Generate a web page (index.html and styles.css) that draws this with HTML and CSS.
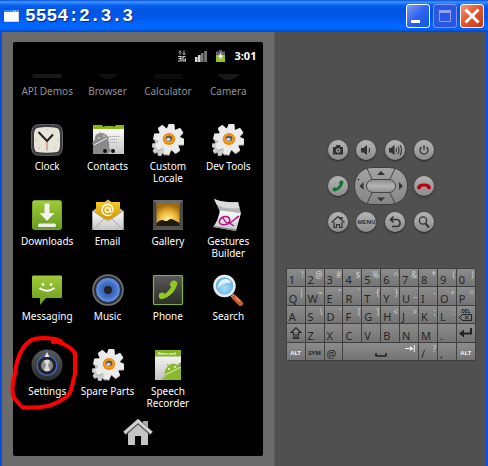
FILE: index.html
```html
<!DOCTYPE html>
<html lang="en">
<head>
    <meta charset="UTF-8">
    <meta name="viewport" content="width=device-width, initial-scale=1.0">
    <title>5554:2.3.3</title>
    <link rel="stylesheet" href="styles.css">
</head>
<body>
    <!-- shared gradients and shapes -->
    <svg class="defs" aria-hidden="true">
        <defs>
            <linearGradient id="steel" x1="0" y1="0" x2="0" y2="1"><stop offset="0" stop-color="#fff"/><stop offset="1" stop-color="#c4c4c4"/></linearGradient>
            <linearGradient id="green" x1="0" y1="0" x2="0" y2="1"><stop offset="0" stop-color="#a0cb3c"/><stop offset="1" stop-color="#669c1c"/></linearGradient>
            <linearGradient id="dark" x1="0" y1="0" x2="0" y2="1"><stop offset="0" stop-color="#595959"/><stop offset="1" stop-color="#2b2b2b"/></linearGradient>
            <linearGradient id="gold" x1="0" y1="0" x2="0" y2="1"><stop offset="0" stop-color="#f6c928"/><stop offset="1" stop-color="#d39a00"/></linearGradient>
            <linearGradient id="pad" x1="0" y1="0" x2="0" y2="1"><stop offset="0" stop-color="#a4a4a4"/><stop offset="1" stop-color="#858585"/></linearGradient>
            <linearGradient id="ok" x1="0" y1="0" x2="0" y2="1"><stop offset="0" stop-color="#8b8b8b"/><stop offset="0.5" stop-color="#b4b4b4"/><stop offset="1" stop-color="#8e8e8e"/></linearGradient>
            <radialGradient id="sunset" cx="0.5" cy="0.75" r="0.7"><stop offset="0" stop-color="#fff3a8"/><stop offset="0.5" stop-color="#eebb3c"/><stop offset="1" stop-color="#a36a08"/></radialGradient>
            <radialGradient id="blue"><stop offset="0" stop-color="#2c4c94"/><stop offset="0.6" stop-color="#4070c8"/><stop offset="1" stop-color="#6c9ae8"/></radialGradient>
            <radialGradient id="lens" cx="0.5" cy="0.6"><stop offset="0" stop-color="#a5dbf7"/><stop offset="1" stop-color="#5fb2e6"/></radialGradient>
            <g id="teeth">
                <circle r="11"/>
                <path id="tooth" d="M-4-10L-2.800-15.500H2.800L4-10V10L2.800 15.500H-2.800L-4 10Z"/>
                <use href="#tooth" transform="rotate(45)"/>
                <use href="#tooth" transform="rotate(90)"/>
                <use href="#tooth" transform="rotate(135)"/>
            </g>
        </defs>
        <symbol id="gear" viewBox="0 0 32 32">
            <use href="#teeth" transform="translate(9 23.500) rotate(10) scale(0.580)" fill="#9c9c9c"/>
            <use href="#teeth" transform="translate(9 22.500) rotate(10) scale(0.580)" fill="#cfcfcf"/>
            <use href="#teeth" transform="translate(17 16) rotate(10)" fill="#a8a8a8"/>
            <use href="#teeth" transform="translate(17 15) rotate(10)" fill="#ebebeb"/>
            <ellipse cx="17" cy="15" rx="6.300" ry="6" fill="#f08a00"/>
            <ellipse cx="17" cy="14.600" rx="4.800" ry="4.200" fill="#ffa62b"/>
            <ellipse cx="17" cy="14.400" rx="3.500" ry="2.800" fill="#5c5c5c"/>
            <ellipse cx="16.400" cy="15.400" rx="2" ry="1.300" fill="#dedede"/>
        </symbol>
        <symbol id="handset" viewBox="0 0 20 20">
            <path d="M4.200 17.800C2.500 17.400 2 15 2.600 13.200C3.500 12 6 11.600 6.600 12.500C7 13.400 7.300 13.200 8.300 12.400C10.500 10.700 11.600 9.200 12.600 7.500C12.300 6.700 11.300 6.500 11.500 5.500C11.800 4 13 2.300 14.500 2.100C16.500 2 18 3 17.800 4.500C16.500 10.500 11.500 16.500 4.200 17.800Z"/>
        </symbol>
    </svg>

    <div class="window">
        <header class="titlebar">
            <svg class="title-icon" width="15" height="12" viewBox="0 0 15 12"><path d="M0 0H15V12H0Z" fill="#fff"/><path d="M0 0H15V2H0Z" fill="#2d8cf0"/><path d="M9 0.500H10V1.500H9ZM11 0.500H12V1.500H11Z" fill="#fff"/><path d="M13 0H14.500V1.500H13Z" fill="#e8a070"/><path d="M0 11.500H14.500V2" fill="none" stroke="#d8d4c4"/></svg>
            <h1 class="title">5554:2.3.3</h1>
            <button class="win-btn" aria-label="Minimize"><svg viewBox="0 0 20 20"><path d="M3 14H12V17H3Z" fill="#fff"/></svg></button>
            <button class="win-btn win-max" aria-label="Maximize" disabled><svg viewBox="0 0 20 20"><path d="M4.500 5.500H15.500V15.500H4.500Z" fill="none" stroke="#8fa4f0"/><path d="M4 4H16V7H4Z" fill="#8fa4f0"/></svg></button>
            <button class="win-btn win-close" aria-label="Close"><svg viewBox="0 0 20 20"><path d="M4.500 4.500L15.500 15.500M15.500 4.500L4.500 15.500" stroke="#fff" stroke-width="3" stroke-linecap="square"/></svg></button>
        </header>

        <main class="emulator">
            <section class="device">
                <div class="screen">
                    <div class="status">
                        <svg width="8" height="12" viewBox="0 0 8 12"><path d="M2 5V1M0.500 2.500L2 0.800L3.500 2.500M6 0.500V4.500M4.500 3L6 4.800L7.500 3" fill="none" stroke="#aaa"/><path d="M0 6.500H3V11H0M0.500 8.700H3M7.500 6.500H5V11H7.500V9H6.300" fill="none" stroke="#ccc" stroke-width="1.200"/></svg>
                        <svg width="12" height="12" viewBox="0 0 12 12"><path d="M0 7H2.600V12H0ZM3 5H5.600V12H3Z" fill="#d4d4d4"/><path d="M6 3H8.600V12H6ZM9.200 1H12V12H9.200Z" fill="#777"/></svg>
                        <svg width="9" height="12" viewBox="0 0 9 12"><path d="M3 0H6V1.500H9V12H0V1.500H3Z" fill="#666"/><path d="M0 5H9V12H0Z" fill="#8fc31f"/><path d="M5.500 2L2 7H4.200L3.500 10.500L7.200 5.500H5Z" fill="#fff"/></svg>
                        <span class="clock">3:01</span>
                    </div>

                    <div class="apps">
                        <button class="app faded"><svg viewBox="0 18 32 14"><path d="M2 25H30L31 29H1Z" fill="#191919"/></svg><span>API Demos</span></button>
                        <button class="app faded"><svg viewBox="0 18 32 14"><path d="M6 25H26Q16 35 6 25Z" fill="#121212"/></svg><span>Browser</span></button>
                        <button class="app faded"><svg viewBox="0 18 32 14"><path d="M2 25H31V30H2Z" fill="#0c0c0c"/></svg><span>Calculator</span></button>
                        <button class="app faded"><svg viewBox="0 18 32 14"><path d="M5 25H28Q16 37 5 25Z" fill="#181818"/></svg><span>Camera</span></button>

                        <button class="app">
                            <svg viewBox="0 0 32 32"><path d="M5 1Q16-1 27 1Q31 2 31.500 9V23Q31 30 27 31Q16 32 5 31Q1 30 0.500 23V9Q1 2 5 1Z" fill="#3b3b40" stroke="#77777c" stroke-width="0.800"/><path d="M6 4Q16 2 26 4Q28.500 5 29 10V22Q28.500 27.500 26 28Q16 29.500 6 28Q3.500 27.500 3 22V10Q3.500 5 6 4Z" fill="#e6e5d8"/><g fill="#aaa89a"><circle cx="16" cy="5.500" r="0.600"/><circle cx="16" cy="26.500" r="0.600"/><circle cx="5" cy="16" r="0.600"/><circle cx="27" cy="16" r="0.600"/><circle cx="8" cy="24" r="0.600"/><circle cx="24" cy="24" r="0.600"/></g><path d="M16 17V26" stroke="#dc6b5b"/><path d="M7.500 8L16 17L22 10.500" fill="none" stroke="#222" stroke-width="2"/></svg>
                            <span>Clock</span>
                        </button>
                        <button class="app">
                            <svg viewBox="0 0 32 32"><path d="M1 3H32V30H1Z" fill="url(#steel)"/><path d="M1 1H10Q11 4 13 2H21Q22 4 24 1H32V5H1Z" fill="#86b817"/><path d="M1 22Q-1 17 3 16Q2 10 8 9L7 7L9 9Q14 9 16 13L18 12L16 15Q18 19 17 24Q20 25 18 28L16 30H1Z" fill="#8a8a8a"/><path d="M2 21L15 14" stroke="#eee"/><circle cx="7" cy="14" r="0.800" fill="#fff"/><circle cx="12" cy="12" r="0.800" fill="#fff"/><g stroke="#aaa" stroke-dasharray="1.500 0.500"><path d="M18 12.500H28M18 15.500H25M18 18.500H26"/></g><circle cx="13" cy="27" r="2" fill="#111"/><circle cx="21" cy="27" r="2" fill="#111"/></svg>
                            <span>Contacts</span>
                        </button>
                        <button class="app"><svg viewBox="0 0 32 32"><use href="#gear"/></svg><span>Custom Locale</span></button>
                        <button class="app"><svg viewBox="0 0 32 32"><use href="#gear"/></svg><span>Dev Tools</span></button>

                        <button class="app">
                            <svg viewBox="0 0 32 32"><rect x="1.500" y="1.500" width="29" height="29" rx="2" fill="url(#green)" stroke="#78a52a"/><path d="M13.500 4.500H18.500V14H23.500L16 22L8.500 14H13.500Z" fill="#f0f0f0"/><rect x="7" y="24.500" width="18" height="3.500" rx="1.500" fill="#eee"/></svg>
                            <span>Downloads</span>
                        </button>
                        <button class="app">
                            <svg viewBox="0 0 32 32"><path d="M0.500 12L16 0.500L31.500 12V31H0.500Z" fill="#bbb"/><path d="M4 3H28V20H4Z" fill="url(#gold)"/><path d="M0.500 12L16 22L31.500 12V31H0.500Z" fill="url(#steel)"/><path d="M1 31L12.500 19.500M31 31L19.500 19.500M0.500 12L14 21Q16 22.500 18 21L31.500 12" fill="none" stroke="#999" stroke-width="0.700"/><g fill="none" stroke="#fff" stroke-width="1.300"><circle cx="15.500" cy="11" r="2.300"/><path d="M18 8.500V12.500Q21 14 21 10.500Q20.500 5.500 15.500 5.500Q10 6 10 11Q10.500 16.500 16 16.500Q18 16.500 19.500 15.500"/></g></svg>
                            <span>Email</span>
                        </button>
                        <button class="app">
                            <svg viewBox="0 0 32 32"><path d="M1 1H31V31H1Z" fill="#4a4a4a"/><path d="M1 1L5 5H27L31 1Z" fill="#6b6b6b"/><path d="M1 31L5 27H27L31 31Z" fill="#555"/><path d="M4.500 4.500H27.500V26H4.500Z" fill="url(#sunset)"/><path d="M4.500 24Q9 20 12 21.500Q15 23 17 20.500Q20 19 23 21.500L27.500 24V27H4.500Z" fill="#201a08"/></svg>
                            <span>Gallery</span>
                        </button>
                        <button class="app">
                            <svg viewBox="0 0 32 32"><path d="M2 0Q12 4 26 3L29 14L8 13Q5 6 2 0Z" fill="#b4b4b4"/><path d="M2 0Q12 4 26 3L27.500 9Q15 11 5 6Z" fill="#dcdcdc"/><path d="M8 11.500L29 14L24 32L1 28Q6 22 8 11.500Z" fill="url(#steel)"/><path d="M2 28L24 32L24.500 30.500L2.500 27Z" fill="#888"/><path d="M27 17C22 20 18 27 10 25.500C4 24 9 17 14 17.500C18 18 19 22 16 24C13 25 13 20 10 18M16 23L22 27" fill="none" stroke="#b7188f" stroke-width="1.500"/></svg>
                            <span>Gestures Builder</span>
                        </button>

                        <button class="app">
                            <svg viewBox="0 0 32 32"><path d="M2 1.500H30Q31 1.500 31 3V23Q31 24 30 24H15L9 31V24H2Q1 24 1 23V3Q1 1.500 2 1.500Z" fill="url(#green)"/><circle cx="12" cy="10.500" r="1.400" fill="#fff"/><circle cx="20" cy="10.500" r="1.400" fill="#fff"/><path d="M8.500 14Q16 19.500 23.500 14" fill="none" stroke="#fff" stroke-width="1.800"/></svg>
                            <span>Messaging</span>
                        </button>
                        <button class="app">
                            <svg viewBox="0 0 32 32"><circle cx="16" cy="16" r="15" fill="#333" stroke="#777" stroke-width="1.500"/><circle cx="16" cy="16" r="12.500" fill="url(#blue)" stroke="#1b2a4a"/><circle cx="16" cy="16" r="4" fill="#222"/></svg>
                            <span>Music</span>
                        </button>
                        <button class="app">
                            <svg viewBox="0 0 32 32"><rect x="1.500" y="1.500" width="29" height="29" rx="1" fill="url(#dark)" stroke="#86b524" stroke-width="1.200"/><use href="#handset" x="4" y="4" width="24" height="24" fill="#8fca1e"/></svg>
                            <span>Phone</span>
                        </button>
                        <button class="app">
                            <svg viewBox="0 0 32 32"><path d="M20 21L29 30" stroke="#a9a9a9" stroke-width="4"/><path d="M22.500 23.500L28.500 29.500" stroke="#c65a2a" stroke-width="5" stroke-linecap="round"/><path d="M23.500 23L28 27.500" stroke="#ec9c70" stroke-width="1.500"/><circle cx="12.500" cy="12" r="10" fill="url(#lens)" stroke="#ececec" stroke-width="2.500"/><path d="M6 12Q7 6 13 5Q18 5 19 9Q12 8 6 14Z" fill="#dff3fd"/></svg>
                            <span>Search</span>
                        </button>

                        <button class="app">
                            <svg viewBox="0 0 32 32"><circle cx="16" cy="16" r="15.500" fill="url(#dark)"/><circle cx="16" cy="16.500" r="9.800" fill="#242424" stroke="#3b6ad2" stroke-width="1.300"/><circle cx="16" cy="16.500" r="6" fill="#8c8c8c"/><path d="M13 11.500Q16 10 19 11.500L17 16.500L19 21.500Q16 23 13 21.500L15 16.500Z" fill="#dcdcdc"/><path d="M16 3L13.500 8H18.500Z" fill="#e6e6e6"/><path d="M14.500 2H17.500" stroke="#3b6ad2"/></svg>
                            <span>Settings</span>
                            <svg class="marker" viewBox="0 0 68 76"><path d="M51 5C41 1 26 1 20 5C11 11 6 25 5 38C2 48 2 57 4 62L12 71C20 72 32 71 38 70C50 66 59 61 61 54L65 38V17C60 10 49 5 43 6" fill="none" stroke="#f00" stroke-width="4" stroke-linecap="round" stroke-linejoin="round"/></svg>
                        </button>
                        <button class="app"><svg viewBox="0 0 32 32"><use href="#gear"/></svg><span>Spare Parts</span></button>
                        <button class="app">
                            <svg viewBox="0 0 32 32"><path d="M3 1H29V31H3Z" fill="url(#steel)"/><path d="M3 1H29V7.500H3Z" fill="#80b520"/><path d="M6 6V4L8 3.500V6M9 6V4.500H11V6M12 6V4.500H14V6M16 4V6M18 6V4.500H20V6M21.500 4V6M23 3V6" stroke="#e5f2c8" stroke-width="1" fill="none"/><path d="M29 31H11Q9 29 11 28L13 30Q11 21 16 17L14 15L17 16Q21 13 26 16L29 13Z" fill="#8abb2c"/><path d="M13 26L29 18" stroke="#e6f0d0"/><circle cx="17" cy="20" r="0.900" fill="#fff"/><circle cx="23" cy="18" r="0.900" fill="#fff"/><path d="M27 14H29V18H27Z" fill="#888"/></svg>
                            <span>Speech Recorder</span>
                        </button>
                    </div>

                    <button class="home" aria-label="Home"><svg viewBox="0 0 30 26"><path d="M20 2H25V10L20 6Z" fill="#aaa"/><path d="M5 14L15 5L25 14V26H18V17H12V26H5Z" fill="#c4c4c4"/><path d="M1.500 14.500L15 2.500L28.500 14.500" fill="none" stroke="#555" stroke-width="4.500"/><path d="M1.500 13.800L15 2L28.500 13.800" fill="none" stroke="#d0d0d0" stroke-width="3"/></svg></button>
                </div>
            </section>

            <aside class="controls">
                <div class="hardware">
                    <div class="hw-row">
                        <button class="hw" aria-label="Camera"><svg viewBox="0 0 20 20"><path d="M5 7H7.500L8.500 5H12L13 7H15V14.500H5Z"/><circle cx="10.200" cy="10.500" r="2.200" fill="#aaa"/><circle cx="10.200" cy="10.500" r="1.100"/></svg></button>
                        <button class="hw" aria-label="Volume down"><svg viewBox="0 0 20 20"><path d="M5 8H7.500L11 5V15L7.500 12.500H5Z"/><path d="M13 8Q14.500 10 13 12.500" fill="none" stroke="#333" stroke-width="1.200"/></svg></button>
                        <button class="hw" aria-label="Volume up"><svg viewBox="0 0 20 20"><path d="M4 8H6L9.500 5V15L6 12.500H4Z"/><path d="M11 8Q12.500 10 11 12.500M13 6.500Q15 10 13 14M15 5Q18 10 15 15.500" fill="none" stroke="#333" stroke-width="1.100"/></svg></button>
                        <button class="hw" aria-label="Power"><svg viewBox="0 0 20 20"><path d="M7.500 7A4 4 0 1 0 12.500 7M10 5V10" fill="none" stroke="#333" stroke-width="1.300"/></svg></button>
                    </div>
                    <div class="hw-row">
                        <button class="hw" aria-label="Call"><svg viewBox="0 0 20 20"><use href="#handset" x="3" y="3" width="14" height="14" fill="#08752c"/></svg></button>
                        <button class="dpad" aria-label="Direction pad"><svg viewBox="0 0 54 38"><path d="M19 0.500H35C46 0.500 53.500 8 53.500 19S46 37.500 35 37.500H19C8 37.500 0.500 30 0.500 19S8 0.500 19 0.500Z" fill="url(#pad)" stroke="#3c3c3c"/><path d="M13 1.500L18 12M41 1.500L36 12M13 36.500L18 26M41 36.500L36 26" stroke="#444"/><rect x="12.500" y="12.500" width="29" height="13" rx="6.500" fill="url(#ok)" stroke="#444"/><path d="M27 4L31 8H23ZM27 34.500L31 30.500H23ZM5.500 19L9.500 15V23ZM49 19L45 15V23Z" fill="#333"/><circle cx="4.500" cy="12.500" r="0.700"/></svg></button>
                        <button class="hw" aria-label="End call"><svg viewBox="0 0 20 20"><path d="M3 12Q3 7.500 10 7.500Q17 7.500 17 12Q17 13.500 14.500 13.300Q12.500 13 12.500 10.800Q10 10 7.500 10.800Q7.500 13 5.500 13.300Q3 13.500 3 12Z" fill="#b90016"/></svg></button>
                    </div>
                    <div class="hw-row">
                        <button class="hw" aria-label="Home"><svg viewBox="0 0 20 20"><path d="M3.500 10.500L10 4.500L12.500 7V5.500H14V8.500L16.500 10.500M6 10V15.500H8.500V12.500H11.500V15.500H14V10" fill="none" stroke="#333" stroke-width="1.200"/></svg></button>
                        <button class="hw menu">MENU</button>
                        <button class="hw" aria-label="Back"><svg viewBox="0 0 20 20"><path d="M8.500 4.500L5.500 7.500L8.500 10.500M5.500 7.500H12Q15 8 15 11Q15 14.500 12 14.500H7" fill="none" stroke="#333" stroke-width="1.600"/></svg></button>
                        <button class="hw" aria-label="Search"><svg viewBox="0 0 20 20"><path d="M11.500 11.500L15 15.500" stroke="#333" stroke-width="2"/><circle cx="9" cy="8.500" r="3.600" fill="none" stroke="#333" stroke-width="1.300"/></svg></button>
                    </div>
                </div>

                <div class="keyboard">
                    <button class="key">1<sup>!</sup></button>
                    <button class="key">2<sup>@</sup></button>
                    <button class="key">3<sup>#</sup></button>
                    <button class="key">4<sup>$</sup></button>
                    <button class="key">5<sup>%</sup></button>
                    <button class="key">6<sup>^</sup></button>
                    <button class="key">7<sup>&amp;</sup></button>
                    <button class="key">8<sup>*</sup></button>
                    <button class="key">9<sup>(</sup></button>
                    <button class="key">0<sup>)</sup></button>

                    <button class="key">Q<sup>|</sup></button>
                    <button class="key">W<sup>~</sup></button>
                    <button class="key">E<sup>"</sup></button>
                    <button class="key">R<sup>`</sup></button>
                    <button class="key">T<sup>{</sup></button>
                    <button class="key">Y<sup>}</sup></button>
                    <button class="key">U<sup>_</sup></button>
                    <button class="key">I<sup>-</sup></button>
                    <button class="key">O<sup>+</sup></button>
                    <button class="key">P<sup>=</sup></button>

                    <button class="key">A</button>
                    <button class="key">S<sup>\</sup></button>
                    <button class="key">D<sup>'</sup></button>
                    <button class="key">F<sup>[</sup></button>
                    <button class="key">G<sup>]</sup></button>
                    <button class="key">H<sup>&lt;</sup></button>
                    <button class="key">J<sup>&gt;</sup></button>
                    <button class="key">K<sup>;</sup></button>
                    <button class="key">L<sup>:</sup></button>
                    <button class="key key-del">DEL<svg width="13" height="7" viewBox="0 0 13 7"><path d="M3.500 0.500H12.500V6.500H3.500L0.500 3.500ZM6 2L9.500 5M9.500 2L6 5" fill="none" stroke="#222"/></svg></button>

                    <button class="key key-icon" aria-label="Shift"><svg width="12" height="12" viewBox="0 0 12 12"><path d="M6 0.700L11 5.500H8.500V8H3.500V5.500H1ZM3.500 10H8.500V11.500H3.500Z" fill="none" stroke="#222" stroke-width="1.100"/></svg></button>
                    <button class="key">Z</button>
                    <button class="key">X</button>
                    <button class="key">C</button>
                    <button class="key">V</button>
                    <button class="key">B</button>
                    <button class="key">N</button>
                    <button class="key">M</button>
                    <button class="key">.</button>
                    <button class="key key-icon" aria-label="Enter"><svg width="13" height="10" viewBox="0 0 13 10"><path d="M12 0V5.500H4" fill="none" stroke="#222" stroke-width="2"/><path d="M0 5.500L5 1.500V9.500Z" fill="#222"/></svg></button>

                    <button class="key key-alt">ALT</button>
                    <button class="key key-sym">SYM</button>
                    <button class="key">@</button>
                    <button class="key key-space" aria-label="Space"><svg width="12" height="4" viewBox="0 0 12 4"><path d="M1 0V3H11V0" fill="none" stroke="#222" stroke-width="1.500"/></svg><svg class="tab" width="10" height="7" viewBox="0 0 10 7"><path d="M0 3.500H7M9.300 0V7" stroke="#eee"/><path d="M5 1L8.500 3.500L5 6Z" fill="#eee"/></svg></button>
                    <button class="key">/<sup>?</sup></button>
                    <button class="key">,</button>
                    <button class="key key-alt">ALT</button>
                </div>
            </aside>
        </main>
    </div>
</body>
</html>
```
FILE: styles.css
```css
* {
    box-sizing: border-box;
}
body {
    margin: 0;
    background: #505050;
    font-family: "Noto Sans", "Open Sans", sans-serif;
    color: white;
}
button {
    margin: 0;
    padding: 0;
    border: none;
    background: none;
    color: inherit;
    font-family: inherit;
    cursor: pointer;
}
svg {
    display: block;
}
.defs {
    position: absolute;
    width: 0;
    height: 0;
}
.window {
    display: flex;
    flex-direction: column;
    min-height: 100vh;
}

/* Title bar */
.titlebar {
    display: flex;
    align-items: center;
    gap: 3px;
    height: 32px;
    padding: 0 4px;
    background: linear-gradient(#0a50d0 0, #3c96ff 2px, #0a62f0 5px, #0054e3 10px, #0058ea 18px, #0068ff 25px, #0064fc 29px, #0044d0 32px);
}
.title-icon {
    flex: none;
}
.title {
    flex: 1;
    margin: 0 0 0 3px;
    font-family: "Liberation Mono", monospace;
    font-size: 18px;
    line-height: 24px;
    font-weight: bold;
    text-shadow: 1px 1px #0a2a80;
}
.win-btn {
    width: 24px;
    height: 24px;
    padding: 1px;
    border: 1px solid white;
    border-radius: 3px;
    background: linear-gradient(135deg, #7d9cf8, #2f62f0 50%, #0d5be0);
}
.win-max {
    border-color: #7d95f0;
    background: #2b56e4;
}
.win-close {
    background: linear-gradient(135deg, #f0997c, #e2512c 50%, #c83c0c);
}

/* Emulator body */
.emulator {
    flex: 1;
    display: flex;
    border: solid #0a50e0;
    border-width: 0 2px;
}
.device {
    flex: none;
    display: flex;
    width: 56.5%;
    padding: 10px 11px;
    background: #6b6b6b;
    border-right: 1px solid #5c5c5c;
}
.screen {
    flex: 1;
    display: flex;
    flex-direction: column;
    background: black;
    border-radius: 2px;
}
.status {
    display: flex;
    align-items: center;
    justify-content: flex-end;
    gap: 9px;
    height: 25px;
    padding: 3px 7px 0 0;
}
.clock {
    font-size: 11px;
    line-height: 12px;
    font-weight: bold;
}
.apps {
    display: grid;
    grid-template-columns: repeat(4, 1fr);
    row-gap: 15px;
    padding: 0 5px 0 4px;
}
.app {
    position: relative;
    display: flex;
    flex-direction: column;
    align-items: center;
    gap: 4px;
    font-size: 10px;
    line-height: 12px;
}
.app > svg {
    width: 32px;
}
.app span {
    min-height: 24px;
}
.faded {
    color: #929292;
}
/* hand-drawn ring round Settings */
.app .marker {
    position: absolute;
    top: -13px;
    left: -7px;
    width: 68px;
    height: 76px;
    overflow: visible;
}
.home {
    width: 30px;
    margin: 10px auto 0;
}

/* Hardware buttons */
.controls {
    flex: 1;
    display: flex;
    flex-direction: column;
    align-items: center;
    gap: 36px;
    padding-top: 108px;
    background: #505050;
}
.hardware {
    display: flex;
    flex-direction: column;
    gap: 7px;
    width: 106px;
}
.hw-row {
    display: flex;
    align-items: center;
    justify-content: space-between;
}
.hw {
    width: 20px;
    height: 20px;
    border-radius: 50%;
    background: linear-gradient(#b4b4b4, #8c8c8c);
    box-shadow: 0 1px 2px #222;
    fill: #333;
}
.menu {
    display: flex;
    align-items: center;
    justify-content: center;
    color: #333;
    font-size: 6px;
    font-weight: bold;
}
.dpad {
    width: 54px;
}

/* Keyboard */
.keyboard {
    display: grid;
    grid-template-columns: repeat(10, minmax(0, 1fr));
    grid-template-rows: repeat(5, 1fr);
    gap: 1px;
    width: 190px;
    height: 93px;
    padding: 1px;
    background: #404040;
}
.key {
    display: flex;
    justify-content: space-between;
    align-items: flex-end;
    min-width: 0;
    padding: 0 1px 0 2px;
    background: linear-gradient(#8c8c8c, #747474);
    color: #262626;
    font-size: 11px;
    line-height: 13px;
}
.key sup {
    align-self: flex-start;
    color: #d0d0d0;
    font-size: 8px;
    line-height: 11px;
}
.key-icon,
.key-alt,
.key-sym,
.key-del {
    align-items: center;
    justify-content: center;
    padding: 0;
}
.key-alt,
.key-sym {
    padding-top: 4px;
    font-size: 6px;
    font-weight: bold;
}
.key-alt {
    color: #eee;
}
.key-del {
    flex-direction: column;
    font-size: 5px;
    line-height: 6px;
    font-weight: bold;
}
.key-space {
    position: relative;
    grid-column: span 4;
    justify-content: center;
    padding-bottom: 3px;
}
.tab {
    position: absolute;
    top: 2px;
    right: 3px;
}
```
